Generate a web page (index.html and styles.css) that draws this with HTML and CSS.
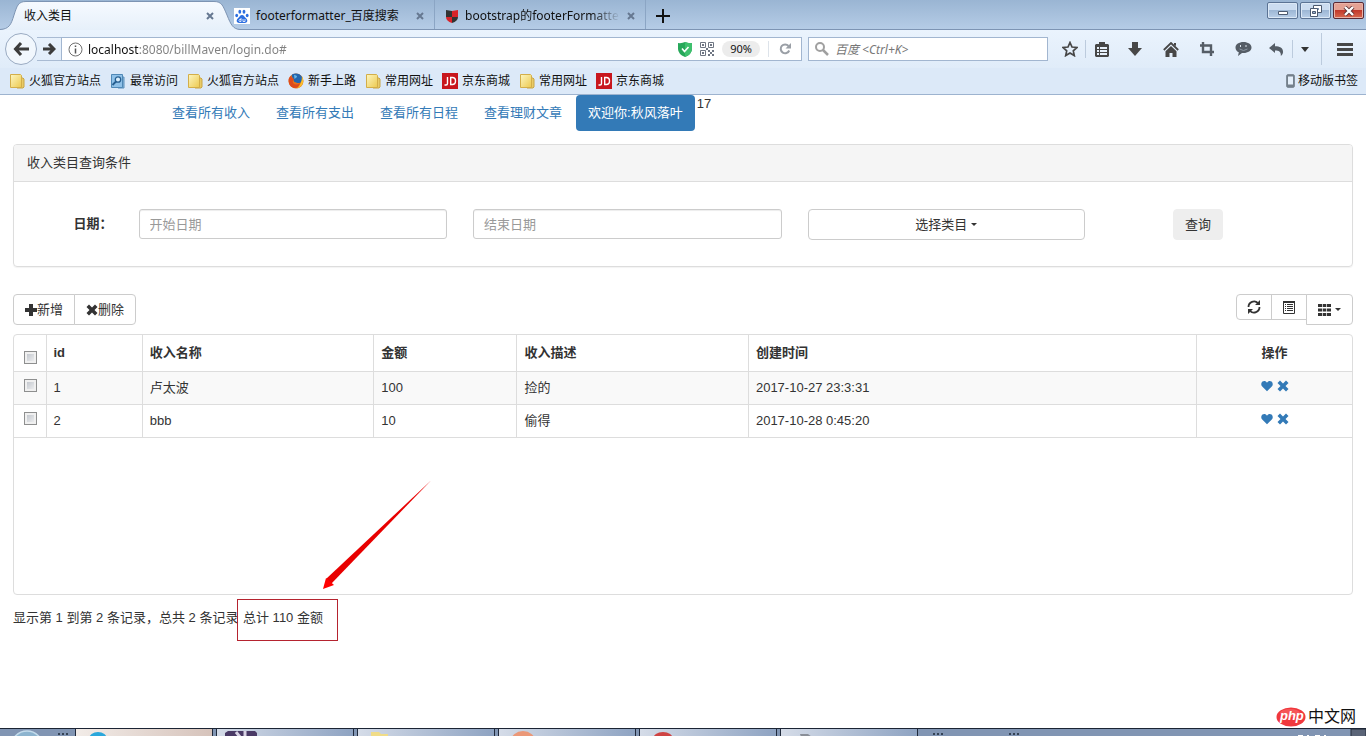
FILE: index.html
```html
<!DOCTYPE html>
<html lang="zh-CN">
<head>
<meta charset="utf-8">
<title>收入类目</title>
<link rel="stylesheet" href="styles.css">
</head>
<body>
<svg class="defs" aria-hidden="true">
  <defs>
    <linearGradient id="folderFill" x1="0" y1="0" x2="1" y2="1"><stop offset="0" stop-color="#fdf6c0"/><stop offset="1" stop-color="#ecc94f"/></linearGradient>
    <linearGradient id="tabFill" x1="0" y1="0" x2="0" y2="1"><stop offset="0" stop-color="#f6faff"/><stop offset="1" stop-color="#e6f0fa"/></linearGradient>
    <symbol id="folder" viewBox="0 0 16 16"><path d="M11 5h3l1 1v8l-1 1H8z" fill="#e8cb68" stroke="#c9a544"/><path d="M1.500 1.500h10l1 1v12h-11z" fill="url(#folderFill)" stroke="#d3ae49"/></symbol>
    <symbol id="jd" viewBox="0 0 16 16"><path d="M0 0h16v16H0z" fill="#c8161d"/><path d="M5.500 4v6.500q0 1.500-1.500 1.500H2.500M8.700 4.500v7h1.600q3.200 0 3.200-3.500t-3.200-3.500z" fill="none" stroke="#fff" stroke-width="1.400"/></symbol>
    <symbol id="close" viewBox="0 0 8 8"><path d="M1 1l6 6M7 1L1 7" stroke="currentColor" stroke-width="2"/></symbol>
    <symbol id="cross" viewBox="0 0 12 12"><path d="M3 .5l3 3 3-3L11.500 3l-3 3 3 3L9 11.500l-3-3-3 3L.5 9l3-3-3-3z" fill="currentColor"/></symbol>
    <symbol id="heart" viewBox="0 0 12 12"><path d="M6 11.300L1.200 6.600C-.3 5 .1 2.600 1.500 1.500 3 .4 5 .9 6 2.700 7 .9 9 .4 10.500 1.500c1.400 1.100 1.800 3.500.3 5.100z" fill="currentColor"/></symbol>
  </defs>
</svg>

<header class="browser">
  <div class="tabs">
    <div class="tab tab-current">
      <svg class="tab-shape" viewBox="0 0 240 30"><path d="M0 29.500C9 29 11 25 14 15C17 6 18 1.500 26 1.500H214C222 1.500 223 6 227 15C231 25 233 29 240 29.500V30H0z" fill="url(#tabFill)"/><path d="M0 29.500C9 29 11 25 14 15C17 6 18 1.500 26 1.500H214C222 1.500 223 6 227 15C231 25 233 29 240 29.500" fill="none" stroke="#7d94b3"/></svg>
      <span class="tab-title">收入类目</span>
      <button class="tab-close" aria-label="关闭标签页"><svg width="8" height="8"><use href="#close"/></svg></button>
    </div>
    <div class="tab">
      <svg width="16" height="16" viewBox="0 0 16 16"><path d="M0 0h16v16H0z" fill="#fff"/><g fill="#2d6fe0"><ellipse cx="2.700" cy="7.500" rx="1.400" ry="1.800"/><ellipse cx="5.800" cy="3.800" rx="1.400" ry="2"/><ellipse cx="10" cy="3.700" rx="1.400" ry="2"/><ellipse cx="13.200" cy="7.500" rx="1.400" ry="1.800"/><path d="M8 7c2 0 2.500 2 4 3.300 2.500 2.200 1 4.700-1 4.700H5c-2 0-3.500-2.500-1-4.700C5.500 9 6 7 8 7z"/></g><path d="M7 10v3.500H5.500q-1-1 0-2H7M9 11v2.500h2V11" fill="none" stroke="#fff" stroke-width=".8"/></svg>
      <span class="tab-title">footerformatter_百度搜索</span>
      <button class="tab-close" aria-label="关闭标签页"><svg width="8" height="8"><use href="#close"/></svg></button>
    </div>
    <div class="tab">
      <svg width="14" height="16" viewBox="0 0 14 16"><path d="M1 2l6 1v6H1z" fill="#333"/><path d="M7 3l6-1v7H7z" fill="#d8232a"/><path d="M1 9h6v6Q1 13 1 9z" fill="#d8232a"/><path d="M13 9H7v6q6-2 6-6z" fill="#333"/></svg>
      <span class="tab-title tab-title-fade">bootstrap的footerFormatte</span>
      <button class="tab-close" aria-label="关闭标签页"><svg width="8" height="8"><use href="#close"/></svg></button>
    </div>
    <button class="tab-new" aria-label="新建标签页"><svg width="14" height="14" viewBox="0 0 14 14"><path d="M7 0v14M0 7h14" stroke="#111" stroke-width="2"/></svg></button>
    <div class="window-controls">
      <button aria-label="最小化"><svg width="12" height="12" viewBox="0 0 12 12"><path d="M1.500 6.500h9v3h-9z" fill="#fff" stroke="#4c5a70"/></svg></button>
      <button aria-label="还原"><svg width="14" height="12" viewBox="0 0 14 12"><path d="M4.500.5h8v7h-8z" fill="#fff" stroke="#4c5a70"/><path d="M7 3h3v2H7z" fill="#7d93b3"/><path d="M1.500 3.500h7v8h-7z" fill="#fff" stroke="#4c5a70"/><path d="M3.500 6.500h3v2h-3z" fill="#9bb2d0" stroke="#4c5a70"/></svg></button>
      <button class="window-close" aria-label="关闭"><svg width="12" height="10" viewBox="0 0 12 10"><path d="M2 1l8 8M10 1L2 9" stroke="#5d3134" stroke-width="4"/><path d="M2 1l8 8M10 1L2 9" stroke="#fff" stroke-width="2.400"/></svg></button>
    </div>
  </div>

  <div class="navbar">
    <button class="nav-back" aria-label="后退"><svg width="16" height="14" viewBox="0 0 16 14"><path d="M8 1L2.500 7 8 13M3 7h13" fill="none" stroke="#3c3c3c" stroke-width="3"/></svg></button>
    <button class="nav-forward" aria-label="前进"><svg width="13" height="12" viewBox="0 0 13 12"><path d="M6 1l5 5-5 5M0 6h10" fill="none" stroke="#3c3c3c" stroke-width="3"/></svg></button>
    <div class="url-box">
      <svg width="15" height="15" viewBox="0 0 15 15"><circle cx="7.500" cy="7.500" r="6.500" fill="none" stroke="#707070"/><path d="M7.500 6.500v5M7.500 3.500v1.500" stroke="#555" stroke-width="1.500"/></svg>
      <input class="url-input" type="text" aria-label="地址" value="localhost:8080/billMaven/login.do#">
      <svg width="14" height="15" viewBox="0 0 14 15"><path d="M0 1q4 .5 7-1 3 1.500 7 1v6q0 5-7 8-7-3-7-8z" fill="#27a85a"/><path d="M7 0q3 1.500 7 1v6q0 5-7 8z" fill="#3fc06e"/><path d="M4 6.500l2.500 3L10.500 5" fill="none" stroke="#fff" stroke-width="1.600"/></svg>
      <svg class="qr" width="14" height="14" viewBox="0 0 14 14"><path d="M.5.5h5v5h-5zM8.500.5h5v5h-5zM.5 8.500h5v5h-5z" fill="none" stroke="#6f7683"/><path d="M2 2h2v2H2zM10 2h2v2h-2zM2 10h2v2H2zM8 8h2v2H8zM10 10h2v2h-2zM12 8h2v2h-2zM8 12h2v2H8zM12 12h2v2h-2zM6 6h2v2H6z" fill="#6f7683"/></svg>
      <span class="zoom-level">90%</span>
      <button class="reload" aria-label="重新载入"><svg width="12" height="12" viewBox="0 0 12 12"><path d="M9.500 3A4.400 4.400 0 1 0 10.200 7.500" fill="none" stroke="#9a9fa6" stroke-width="2"/><path d="M12 0v5.500H6.500z" fill="#9a9fa6"/></svg></button>
    </div>
    <div class="search-box">
      <svg width="14" height="14" viewBox="0 0 14 14"><circle cx="5" cy="5" r="4" fill="none" stroke="#a0a0a0" stroke-width="2"/><path d="M8 8l5 5" stroke="#a0a0a0" stroke-width="2.500"/></svg>
      <input type="search" aria-label="搜索" placeholder="百度 &lt;Ctrl+K&gt;">
    </div>
    <div class="tools">
      <button class="tool tool-narrow" aria-label="收藏"><svg width="16" height="16" viewBox="0 0 16 16"><path d="M8 1.500l2 4.500 5 .5-3.700 3.300 1 4.800L8 12l-4.300 2.600 1-4.800L1 6.500 6 6z" fill="none" stroke="#474747" stroke-width="1.700"/></svg></button>
      <span class="divider"></span>
      <button class="tool tool-narrow" aria-label="书签"><svg width="14" height="15" viewBox="0 0 14 15"><path d="M4 0h6v2h3l1 1v11l-1 1H1l-1-1V3l1-1h3z" fill="#474747"/><path d="M2 5h2v2H2zM5 5h7v2H5zM2 8h2v2H2zM5 8h7v2H5zM2 11h2v2H2zM5 11h7v2H5z" fill="#e8f1fb"/></svg></button>
      <button class="tool" aria-label="下载"><svg width="14" height="14" viewBox="0 0 14 14"><path d="M4 0h6v6h4l-7 8-7-8h4z" fill="#474747"/></svg></button>
      <button class="tool" aria-label="主页"><svg width="16" height="15" viewBox="0 0 16 15"><path d="M.8 8L8 1l7.200 7" fill="none" stroke="#474747" stroke-width="1.800"/><path d="M8 4l5.500 5.300V15H9.500v-4h-3v4h-4V9.300zM11 1h2v3l-2-1z" fill="#474747"/></svg></button>
      <button class="tool" aria-label="截图"><svg width="14" height="14" viewBox="0 0 14 14"><path d="M3 0v10h11M0 3.500h11V14" fill="none" stroke="#555d66" stroke-width="2.400"/></svg></button>
      <button class="tool" aria-label="聊天"><svg width="17" height="14" viewBox="0 0 17 14"><path d="M8.500 0C13 0 16.500 2.300 16.500 5.500S13 11 8.500 11H7l-4 3 .8-3.700C1.500 9.300.5 7.500.5 5.500.5 2.300 4 0 8.500 0z" fill="#555d66"/><path d="M4.500 7q4 3 8 0" fill="none" stroke="#8b96a2"/><path d="M5.500 3v2M11 3v2" stroke="#dfe7ef"/></svg></button>
      <button class="tool tool-narrow" aria-label="撤销"><svg width="15" height="13" viewBox="0 0 15 13"><path d="M6 0v3.200c5 0 8.500 2 8 6.300-.2 1.500-1 2.800-2.200 3.500.4-4-1.500-5.600-5.800-5.600V10L0 5z" fill="#555d66"/></svg></button>
      <span class="divider"></span>
      <button class="tool-caret" aria-label="更多"><svg width="8" height="5" viewBox="0 0 8 5"><path d="M0 0h8L4 5z" fill="#333"/></svg></button>
      <span class="divider divider-tall"></span>
      <button class="tool tool-menu" aria-label="菜单"><svg width="16" height="13" viewBox="0 0 16 13"><path d="M0 1.500h16M0 6.500h16M0 11.500h16" stroke="#474747" stroke-width="3"/></svg></button>
    </div>
  </div>

  <nav class="bookmarks">
    <a href="#"><svg width="16" height="16"><use href="#folder"/></svg>火狐官方站点</a>
    <a href="#"><svg width="16" height="16" viewBox="0 0 16 16"><path d="M11 4h3v11H8z" fill="#8bb8da" stroke="#5b90bb"/><path d="M1.500 1.500h11v13h-11z" fill="#8fc1e8" stroke="#4f88b6"/><circle cx="8" cy="6.500" r="2.700" fill="#d7ecfb" stroke="#265f91" stroke-width="1.300"/><path d="M6 8.500L2.500 12" stroke="#265f91" stroke-width="1.800"/></svg>最常访问</a>
    <a href="#"><svg width="16" height="16"><use href="#folder"/></svg>火狐官方站点</a>
    <a href="#"><svg width="16" height="16" viewBox="0 0 16 16"><circle cx="8" cy="8" r="7.500" fill="#e8711a"/><path d="M4 1.500C7-.3 12 0 14 4c1 3-1 6-3 6S6 10 5.500 7 3 4 4 1.500z" fill="#2466ad"/><path d="M6 2q3 0 3 2L6.500 6z" fill="#6cb8e6"/><path d="M.6 6Q2 3 3 3q0 2 3 3-2 2-1 4 3 3 7 0-1 5-6 5Q0 13 .6 6z" fill="#dd4b1c"/><path d="M14 3q2.500 5 0 9-2 3-5 3.400Q14 11 14 3z" fill="#f9c02c"/></svg>新手上路</a>
    <a href="#"><svg width="16" height="16"><use href="#folder"/></svg>常用网址</a>
    <a href="#"><svg width="16" height="16"><use href="#jd"/></svg>京东商城</a>
    <a href="#"><svg width="16" height="16"><use href="#folder"/></svg>常用网址</a>
    <a href="#"><svg width="16" height="16"><use href="#jd"/></svg>京东商城</a>
    <a class="mobile" href="#"><svg width="9" height="14" viewBox="0 0 9 14"><rect x=".7" y=".7" width="7.600" height="12.600" rx="1" fill="#74808c" stroke="#74808c"/><path d="M2 2.500h5v8H2z" fill="#e4effa"/></svg>移动版书签</a>
  </nav>
</header>

<main class="page">
  <nav class="pills">
    <a href="#">查看所有收入</a>
    <a href="#">查看所有支出</a>
    <a href="#">查看所有日程</a>
    <a href="#">查看理财文章</a>
    <a class="active" href="#">欢迎你:秋风落叶</a>
    <span>17</span>
  </nav>

  <section class="panel">
    <h1 class="panel-heading">收入类目查询条件</h1>
    <form class="filters">
      <label for="start">日期<span class="mark">：</span></label>
      <div class="cell"><input id="start" class="field" type="text" placeholder="开始日期"></div>
      <div class="cell"><input class="field" type="text" placeholder="结束日期" aria-label="结束日期"></div>
      <div class="cell"><button type="button" class="btn btn-category">选择类目<i class="caret"></i></button></div>
      <div class="cell cell-submit"><button type="button" class="btn btn-query">查询</button></div>
    </form>
  </section>

  <div class="toolbar">
    <div class="group">
      <button class="btn"><svg width="12" height="12" viewBox="0 0 12 12"><path d="M4 0h4v4h4v4H8v4H4V8H0V4h4z" fill="currentColor"/></svg>新增</button>
      <button class="btn"><svg width="12" height="12"><use href="#cross"/></svg>删除</button>
    </div>
    <div class="group">
      <button class="btn btn-tool" aria-label="刷新"><svg width="14" height="14" viewBox="0 0 14 14"><path d="M1.500 7A5.500 5.500 0 0 1 11 3.200M12.500 7A5.500 5.500 0 0 1 3 10.800" fill="none" stroke="currentColor" stroke-width="1.800"/><path d="M13 0v5H8zM1 14V9h5z" fill="currentColor"/></svg></button>
      <button class="btn btn-tool" aria-label="切换"><svg width="12" height="13" viewBox="0 0 12 13"><path d="M.5.5h11v12H.5z" fill="none" stroke="currentColor"/><path d="M0 0h12v2H0zM2 3h1v1H2zM4 3h6v1H4zM2 5h1v1H2zM4 5h6v1H4zM2 7h1v1H2zM4 7h6v1H4zM2 9h1v1H2zM4 9h6v1H4z" fill="currentColor"/></svg></button>
      <button class="btn" aria-label="列"><svg width="13" height="12" viewBox="0 0 13 12"><path d="M0 0h4v3H0zM4.700 0h3.600v3H4.700zM9 0h4v3H9zM0 4.500h4v3H0zM4.700 4.500h3.600v3H4.700zM9 4.500h4v3H9zM0 9h4v3H0zM4.700 9h3.600v3H4.700zM9 9h4v3H9z" fill="currentColor"/></svg><i class="caret"></i></button>
    </div>
  </div>

  <div class="table-box">
    <table>
      <colgroup><col class="c-check"><col class="c-id"><col class="c-name"><col class="c-amount"><col class="c-name"><col class="c-time"><col></colgroup>
      <thead>
        <tr><th class="check"><input type="checkbox" aria-label="全选"></th><th>id</th><th>收入名称</th><th>金额</th><th>收入描述</th><th>创建时间</th><th class="ops">操作</th></tr>
      </thead>
      <tbody>
        <tr><td class="check"><input type="checkbox" aria-label="选择 1"></td><td>1</td><td>卢太波</td><td>100</td><td>捡的</td><td>2017-10-27 23:3:31</td><td class="ops"><a href="#" aria-label="收藏"><svg width="12" height="12"><use href="#heart"/></svg></a><a href="#" aria-label="删除"><svg width="12" height="12"><use href="#cross"/></svg></a></td></tr>
        <tr><td class="check"><input type="checkbox" aria-label="选择 2"></td><td>2</td><td>bbb</td><td>10</td><td>偷得</td><td>2017-10-28 0:45:20</td><td class="ops"><a href="#" aria-label="收藏"><svg width="12" height="12"><use href="#heart"/></svg></a><a href="#" aria-label="删除"><svg width="12" height="12"><use href="#cross"/></svg></a></td></tr>
      </tbody>
    </table>
  </div>

  <div class="summary">
    <span class="records">显示第 1 到第 2 条记录<span class="mark">，</span>总共 2 条记录</span>
    <span class="total">总计 110 金额
      <svg class="arrow" width="110" height="110" viewBox="0 0 110 110"><path d="M109 .5L9 104l-5-5z" fill="#e80000"/><path d="M1 109L4 98l8 7z" fill="#f00"/></svg>
    </span>
  </div>

  <div class="brand">
    <svg width="30" height="20" viewBox="0 0 30 20"><ellipse cx="15" cy="10" rx="14.500" ry="9.500" fill="#f0383d"/><ellipse cx="14" cy="6" rx="10" ry="4" fill="#fa6a6c" opacity=".6"/></svg>
    <b>php</b><span>中文网</span>
  </div>
</main>

<footer class="taskbar">
  <div class="start"><svg width="75" height="8" viewBox="0 0 75 8"><circle cx="27" cy="18" r="16" fill="#8db4cf" stroke="#c4dcec" stroke-width="1.500"/><path d="M58 5h2M62 5h2M66 5h2" stroke="#1d2838" stroke-width="1.500"/></svg></div>
  <button class="task task-live" aria-label="浏览器"><svg width="20" height="6" viewBox="0 0 20 6"><ellipse cx="10" cy="8" rx="9" ry="7" fill="#2ba7db"/></svg></button>
  <button class="task task-left" aria-label="开发工具"><svg width="34" height="6" viewBox="0 0 34 6"><path d="M1 6V2l3-2h27l2 2v4z" fill="#4a3a66"/><path d="M12 1l4 5M21 0v6" stroke="#d8d2e4" stroke-width="3"/></svg></button>
  <button class="task" aria-label="文件夹"><svg width="20" height="6" viewBox="0 0 20 6"><path d="M1 6V1h8l2 2h7v3z" fill="#f0dc88"/></svg></button>
  <button class="task" aria-label="应用一"><svg width="24" height="6" viewBox="0 0 24 6"><ellipse cx="12" cy="10" rx="12" ry="10" fill="#eb9878"/></svg></button>
  <button class="task" aria-label="应用二"><svg width="22" height="6" viewBox="0 0 22 6"><ellipse cx="11" cy="8" rx="10" ry="7" fill="#cf4343"/></svg></button>
  <button class="task" aria-label="应用三"><svg width="20" height="6" viewBox="0 0 20 6"><path d="M7 3h8l4 3H8z" fill="#8a8f98"/></svg></button>
  <svg class="tray" width="100" height="8" viewBox="0 0 100 8"><path d="M12 5h2M16 5h2M20 5h2M88 5h2M92 5h2M96 5h2" stroke="#1d2838" stroke-width="1.500"/></svg>
  <svg class="clock" width="68" height="8" viewBox="0 0 68 8"><path d="M0 6.500h5M9 6.500h2M17 6.500h5M26 6.500h2" stroke="#fff"/><path d="M53 0h15v8H53z" fill="#5a6477" stroke="#252c3a"/></svg>
</footer>
</body>
</html>
```

FILE: styles.css
```css
* { box-sizing: border-box; }

body {
  margin: 0;
  height: 100vh;
  display: flex;
  flex-direction: column;
  overflow: hidden;
  background: #fff;
  color: #333;
  font: 13px/18px "Liberation Sans", "Noto Sans CJK SC", sans-serif;
}

svg { display: block; flex: none; }
button, input { font: inherit; color: inherit; }
button { border: 0; padding: 0; background: none; }
a { text-decoration: none; }
.defs { position: absolute; width: 0; height: 0; }
.mark { font-family: "Noto Sans CJK TC", sans-serif; line-height: 1; }

/* browser frame */
.browser {
  flex: none;
  color: #111;
  font: 12px/16px "Noto Sans", "Noto Sans CJK SC", sans-serif;
  background: #dce9f8;
  border-bottom: 1px solid #9db3cf;
}

.tabs {
  display: flex;
  height: 30px;
  background: linear-gradient(#9ab5d3, #b5cce6);
  border-bottom: 1px solid #7d94b3;
}

.tab {
  display: flex;
  align-items: center;
  gap: 6px;
  width: 211px;
  height: 29px;
  padding: 2px 9px 0 10px;
  border-right: 1px solid #8ba5c4;
}

.tab-current {
  position: relative;
  width: 224px;
  padding: 2px 9px 0 24px;
  border: 0;
}

.tab-shape { position: absolute; left: 0; top: 0; width: 240px; height: 30px; }
.tab-title { position: relative; flex: 1; white-space: nowrap; }
.tab-title-fade { -webkit-mask-image: linear-gradient(90deg, #000 82%, transparent); mask-image: linear-gradient(90deg, #000 82%, transparent); }
.tab-close { position: relative; color: #667891; padding: 1px; }
.tab-new { padding: 2px 10px 0; }

.window-controls {
  display: flex;
  gap: 2px;
  margin: 2px 2px 0 auto;
}

.window-controls button {
  display: flex;
  align-items: center;
  justify-content: center;
  width: 31px;
  height: 17px;
  border: 1px solid #5b7394;
  border-radius: 2px;
  background: linear-gradient(#cbdcf0 45%, #9db7d5 50%, #b9cfe8);
  box-shadow: inset 0 0 0 1px #dbe8f6;
}

.window-controls .window-close {
  border-color: #5a2a35;
  background: linear-gradient(#e4a193 45%, #c2392b 50%, #d9694f);
  box-shadow: inset 0 0 0 1px #e9b3a8;
}

.navbar {
  display: flex;
  align-items: center;
  height: 38px;
  padding: 0 9px 0 5px;
  background: linear-gradient(#eaf3fd, #e0ecf9);
}

.nav-back {
  display: flex;
  align-items: center;
  justify-content: center;
  width: 32px;
  height: 32px;
  border: 1px solid #9aabc2;
  border-radius: 50%;
  background: #f1f7fd;
}

.nav-forward {
  display: flex;
  align-items: center;
  justify-content: center;
  width: 24px;
  height: 24px;
  border: solid #a9bbd3;
  border-width: 1px 0;
}

.url-box, .search-box {
  display: flex;
  align-items: center;
  height: 24px;
  border: 1px solid #a2b6d0;
  background: #fff;
}

.url-box { flex: 1; gap: 8px; padding-left: 6px; }
.search-box { width: 240px; margin-left: 6px; padding-left: 6px; gap: 6px; }

.url-input {
  flex: 1;
  min-width: 0;
  height: 20px;
  padding: 0;
  margin-left: -3px;
  border: 0;
  outline: 0;
  color: transparent;
  background: linear-gradient(90deg, #111 51px, #808080 51px);
  -webkit-background-clip: text;
  background-clip: text;
}

.zoom-level {
  padding: 0 8px;
  border-radius: 8px;
  background: #ececec;
  font-size: 11px;
}

.reload { padding: 2px 10px; border-left: 1px solid #dde3ea; }

.search-box input {
  flex: 1;
  min-width: 0;
  height: 20px;
  padding: 0;
  border: 0;
  outline: 0;
  background: none;
}

.search-box input::placeholder { color: #777; font-style: italic; }

.tools { display: flex; align-items: center; margin-left: 6px; }
.tool { display: flex; justify-content: center; width: 36px; }
.tool-narrow { width: 31px; }
.tool-caret { padding: 0 8px; }
.tool-menu { width: 25px; margin-left: 10px; }
.divider { width: 1px; height: 18px; background: #bccbdd; }
.divider-tall { height: 32px; margin-left: 4px; }

.bookmarks {
  display: flex;
  align-items: center;
  gap: 9px;
  height: 26px;
  padding: 0 8px 0 9px;
  white-space: nowrap;
}

.bookmarks a { display: flex; align-items: center; gap: 4px; color: #111; }
.bookmarks .mobile { margin-left: auto; gap: 3px; }

/* page */
.page {
  position: relative;
  flex: 1;
  min-height: 0;
  padding: 0 13px;
}

.pills { display: flex; gap: 2px; padding-left: 147px; }
.pills a { padding: 9px 12px; border-radius: 4px; color: #337ab7; }
.pills .active { background: #337ab7; color: #fff; }

.panel {
  margin-top: 13px;
  border: 1px solid #ddd;
  border-radius: 4px;
  box-shadow: 0 1px 1px rgba(0, 0, 0, .05);
}

.panel-heading {
  margin: 0;
  padding: 9px 13px;
  border-bottom: 1px solid #ddd;
  border-radius: 3px 3px 0 0;
  background: #f5f5f5;
  font-size: 13px;
  font-weight: 400;
}

.filters {
  display: grid;
  grid-template-columns: 1fr 3fr 3fr 3fr 2fr;
  padding: 27px 0 26px;
}

.filters label { padding: 6px 13px 0 0; text-align: right; font-weight: 700; }
.cell { padding: 0 13px; }
.cell-submit { padding-left: 44px; }

.field {
  display: block;
  width: 100%;
  height: 30px;
  padding: 5px 10px;
  border: 1px solid #ccc;
  border-radius: 3px;
  box-shadow: inset 0 1px 1px rgba(0, 0, 0, .075);
}

.field::placeholder { color: #999; }

.btn {
  display: flex;
  align-items: center;
  justify-content: center;
  height: 31px;
  padding: 0 11px;
  border: 1px solid #ccc;
  border-radius: 4px;
  background: #fff;
}

.btn-category { width: 90%; }
.btn-query { border-color: #eee; background: #eee; }

.caret {
  margin-left: 4px;
  border: solid transparent;
  border-width: 3px 3px 0;
  border-top-color: #333;
}

.toolbar {
  display: flex;
  justify-content: space-between;
  margin-top: 27px;
}

.group { display: flex; align-items: flex-start; }
.group .btn + .btn { margin-left: -1px; border-top-left-radius: 0; border-bottom-left-radius: 0; }
.group .btn:not(:last-child) { border-top-right-radius: 0; border-bottom-right-radius: 0; }
.group .btn-tool { width: 36px; height: 26px; padding: 0; }

.table-box {
  height: 261px;
  margin-top: 9px;
  border: 1px solid #ddd;
  border-radius: 4px;
}

table { width: 100%; table-layout: fixed; border-collapse: collapse; }
.c-check { width: 32px; }
.c-id { width: 7.2%; }
.c-name { width: 17.3%; }
.c-amount { width: 10.7%; }
.c-time { width: 33.5%; }

th, td {
  padding: 7px;
  border: 1px solid #ddd;
  text-align: left;
  vertical-align: top;
}

th { height: 36px; padding-top: 9px; }
td { height: 33px; }
tr > :first-child { border-left: 0; }
tr > :last-child { border-right: 0; }
thead th { border-top: 0; }
tbody tr:first-child { background: #f9f9f9; }
td.check { padding: 7px 8px 0 10px; }
th.check { padding: 16px 8px 0 10px; }
.ops { text-align: center; }
.ops a { display: inline-block; margin: 1px 2px 0; color: #337ab7; }

.check input {
  display: block;
  appearance: none;
  width: 13px;
  height: 13px;
  margin: 0;
  border: 1px solid #8e8f8f;
  background: linear-gradient(135deg, #b9bec6, #f6f6f6);
  box-shadow: inset 0 0 0 2px #f0f0f0;
}

.summary { display: flex; align-items: flex-start; padding-top: 4px; }
.records { width: 224px; padding-top: 10px; white-space: nowrap; }

.total {
  position: relative;
  width: 101px;
  height: 42px;
  padding: 9px 5px;
  border: 1px solid #b5232f;
  white-space: nowrap;
}

.arrow { position: absolute; left: 84px; top: -120px; }

.brand {
  position: absolute;
  right: 10px;
  bottom: 1px;
  display: flex;
  align-items: center;
  gap: 2px;
  color: #111;
  font-size: 16px;
  line-height: 20px;
}

.brand b {
  position: absolute;
  left: 4px;
  top: -1px;
  color: #fff;
  font-size: 13px;
  font-style: italic;
}

/* desktop taskbar */
.taskbar {
  display: flex;
  flex: none;
  height: 8px;
  overflow: hidden;
  border-top: 1px solid #1b2434;
  background: #8195b3;
}

.start { width: 75px; }

.task {
  width: 138px;
  height: 8px;
  margin-right: 3px;
  padding: 1px 0 0 12px;
  border-left: 1px solid #202a3c;
  border-right: 1px solid #202a3c;
  background: linear-gradient(90deg, #d5dce8, #8ea3c2);
}

.task-live { background: linear-gradient(90deg, #f2ece8, #d6c3bb); }
.task-left { padding-left: 7px; }
.clock { margin-left: auto; }
```
